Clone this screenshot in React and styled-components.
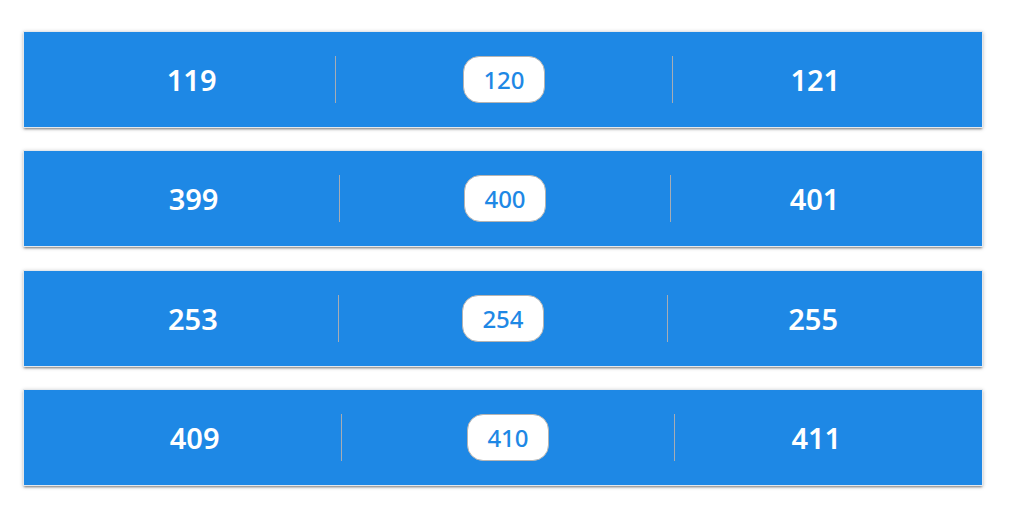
import React from "react";
import styled, { createGlobalStyle } from "styled-components";

const GlobalStyle = createGlobalStyle`
  * { box-sizing: border-box; }
  body {
    margin: 0;
    background: #fff;
    font-family: "Noto Sans", "Open Sans", sans-serif;
  }
`;

const Page = styled.main`
  display: flex;
  flex-direction: column;
  justify-content: space-between;
  min-height: 100vh;
  padding: 31px 30px 38px 23px;
`;

const Row = styled.section`
  display: flex;
  justify-content: space-evenly;
  padding: 24px;
  border: 1px solid #e4e8ec;
  background: #1e88e5;
  box-shadow: 0 1px 4px rgba(0, 0, 0, 0.22), 0 2px 2px -1px rgba(0, 0, 0, 0.4);
`;

const Neighbour = styled.span`
  display: flex;
  justify-content: center;
  width: ${(p) => p.$width}px;
  color: #fff;
  font-size: 29px;
  font-weight: 600;
  line-height: 47px;
`;

const Divider = styled.span`
  width: 1px;
  background: #a6acb4;
`;

const Current = styled.strong`
  width: 82px;
  border: 1px solid #b4b4b4;
  border-radius: 16px;
  background: #fff;
  color: #1e88e5;
  font-size: 24px;
  font-weight: 500;
  line-height: 45px;
  text-align: center;
`;

// Narrow figures get a slimmer slot, so the dividers follow the digits.
const rows = [
  { value: 120, before: 34, after: 32 },
  { value: 400, before: 43, after: 39 },
  { value: 254, before: 43, after: 43 },
  { value: 410, before: 44, after: 34 },
];

export default function App() {
  return (
    <>
      <GlobalStyle />
      <Page>
        {rows.map(({ value, before, after }) => (
          <Row key={value}>
            <Neighbour $width={before}>{value - 1}</Neighbour>
            <Divider />
            <Current>{value}</Current>
            <Divider />
            <Neighbour $width={after}>{value + 1}</Neighbour>
          </Row>
        ))}
      </Page>
    </>
  );
}
